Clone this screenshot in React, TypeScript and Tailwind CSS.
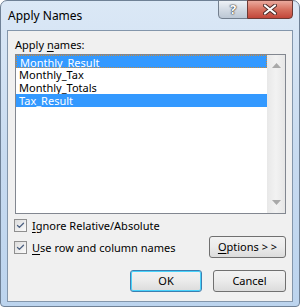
import { Check } from 'lucide-react';

const items = ['Monthly_Result', 'Monthly_Tax', 'Monthly_Totals', 'Tax_Result'];
const selected = [0, 3];

function CheckBox({ label, keyChar }: { label: string; keyChar: string }) {
    const rest = label.slice(1);
    return (
        <div className="flex items-center h-[13px]">
            <div className="w-[13px] h-[13px] border border-[#8f8f8f] bg-gradient-to-br from-[#dcdcdc] to-[#fbfbfb] flex items-center justify-center">
                <Check className="w-[9px] h-[9px] text-[#4a5f80]" strokeWidth={3.5} />
            </div>
            <span className="ml-[5px] leading-[13px]">
                <span className="underline underline-offset-2">{keyChar}</span>{rest}
            </span>
        </div>
    );
}

function Button({ children, primary, className }: { children: React.ReactNode; primary?: boolean; className?: string }) {
    return (
        <div
            className={
                'h-[22px] rounded-[3px] border flex items-center justify-center bg-gradient-to-b from-[#f2f2f2] via-[#ebebeb] to-[#dcdcdc] ' +
                (primary ? 'border-[#3c7fb1] shadow-[inset_0_0_0_1px_#48d2fb] ' : 'border-[#707070] ') +
                (className ?? '')
            }
        >
            {children}
        </div>
    );
}

export default function App() {
    return (
        <div
            className="w-[300px] h-[307px] flex flex-col rounded-t-[7px] rounded-b-[4px] border border-[#6f8196] bg-gradient-to-b from-[#dbe8f6] via-[#c8dbf0] to-[#bcd4ee] text-[11px] text-black"
            style={{ fontFamily: '"Noto Sans", "Open Sans", sans-serif' }}
        >
            {/* Title bar */}
            <div className="h-[29px] flex items-start">
                <div className="pl-[7px] pt-[7px] text-[12px] leading-[16px] text-black">Apply Names</div>
                <div className="ml-auto mr-[6px] flex h-[19px] -mt-px">
                    <div className="w-[30px] h-full border border-[#737f8e] rounded-bl-[4px] bg-gradient-to-b from-[#eef2f6] via-[#d3dbe4] to-[#bcc7d4] flex items-center justify-center">
                        <span
                            className="text-white font-bold text-[13px] leading-[13px]"
                            style={{ textShadow: '0 0 1px #333, 0 0 1px #333, 0 0 2px #555' }}
                        >
                            ?
                        </span>
                    </div>
                    <div className="w-[46px] h-full -ml-px border border-[#6d3a35] rounded-br-[4px] bg-gradient-to-b from-[#eaa99d] via-[#d6705f] to-[#c2463a] flex items-center justify-center">
                        <svg width="14" height="11" viewBox="0 0 14 11">
                            <path d="M2 1.5 L12 9.5 M12 1.5 L2 9.5" stroke="#4b2a27" strokeWidth="4" strokeLinecap="round" />
                            <path d="M2 1.5 L12 9.5 M12 1.5 L2 9.5" stroke="#ffffff" strokeWidth="2.2" strokeLinecap="round" />
                        </svg>
                    </div>
                </div>
            </div>

            {/* Client area */}
            <div className="mx-[6px] mb-[4px] flex-1 border border-[#8396ab] bg-[#f0f0f0] flex flex-col pl-[7px] pr-[6px]">
                <div className="mt-[6px] leading-[15px]">
                    Apply <span className="underline underline-offset-2">n</span>ames:
                </div>

                <div className="mt-[2px] h-[160px] border border-[#828790] bg-white flex">
                    <div className="flex-1 flex flex-col">
                        {items.map((name, i) => (
                            <div
                                key={name}
                                className={
                                    'h-[13px] leading-[13px] pl-[3px] ' +
                                    (selected.includes(i) ? 'bg-[#3399ff] text-white ' : '') +
                                    (i === 0 ? 'border border-dotted border-[#c8893a] pl-[2px] leading-[11px]' : '')
                                }
                            >
                                {name}
                            </div>
                        ))}
                    </div>
                    <div className="w-[18px] bg-gradient-to-r from-[#e8e8e8] via-[#f2f2f2] to-[#e6e6e6] flex flex-col items-center justify-between py-[8px]">
                        <svg width="9" height="5" viewBox="0 0 9 5">
                            <path d="M0 5 L4.5 0 L9 5 Z" fill="#a9a9a9" />
                        </svg>
                        <svg width="9" height="5" viewBox="0 0 9 5">
                            <path d="M0 0 L4.5 5 L9 0 Z" fill="#a9a9a9" />
                        </svg>
                    </div>
                </div>

                <div className="mt-[5px] -ml-px">
                    <CheckBox label="Ignore Relative/Absolute" keyChar="I" />
                </div>
                <div className="mt-[4px] -ml-px flex items-center justify-between">
                    <CheckBox label="Use row and column names" keyChar="U" />
                    <Button className="w-[77px]">
                        <span>
                            <span className="underline underline-offset-2">O</span>ptions &gt; &gt;
                        </span>
                    </Button>
                </div>

                <div className="mt-[12px] flex justify-end gap-[11px]">
                    <Button primary className="w-[72px]">OK</Button>
                    <Button className="w-[73px]">Cancel</Button>
                </div>
            </div>
        </div>
    );
}
